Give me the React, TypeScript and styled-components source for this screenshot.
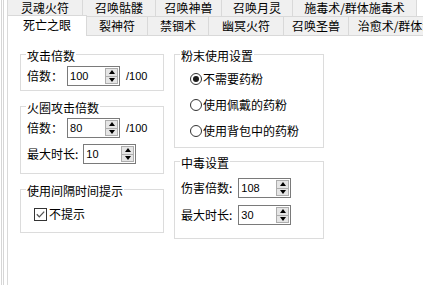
import styled, { createGlobalStyle } from 'styled-components';

const GlobalStyle = createGlobalStyle`
  html, body {
    margin: 0;
    padding: 0;
    background: #fff;
  }
  body {
    font-family: "Noto Sans CJK SC", "Noto Sans", sans-serif;
    font-size: 12px;
    line-height: 14px;
    color: #000;
    overflow: hidden;
  }
`;

type TabItem = { label: string; width: number };

const topTabs: TabItem[] = [
  { label: '灵魂火符', width: 76 },
  { label: '召唤骷髅', width: 74 },
  { label: '召唤神兽', width: 67 },
  { label: '召唤月灵', width: 72 },
  { label: '施毒术/群体施毒术', width: 125 },
];

const bottomTabs: TabItem[] = [
  { label: '死亡之眼', width: 80 },
  { label: '裂神符', width: 62 },
  { label: '禁锢术', width: 62 },
  { label: '幽冥火符', width: 76 },
  { label: '召唤圣兽', width: 66 },
  { label: '治愈术/群体治愈术', width: 120 },
];

const SpinBox = ({ value }: { value: string }) => (
  <Spin>
    <SpinValue>{value}</SpinValue>
    <SpinButtons>
      <SpinButton>
        <Arrow $up />
      </SpinButton>
      <SpinButton>
        <Arrow />
      </SpinButton>
    </SpinButtons>
  </Spin>
);

const Radio = ({ checked }: { checked?: boolean }) => (
  <svg width="12" height="12" viewBox="0 0 12 12">
    <circle cx="6" cy="6" r="5.5" fill="#fff" stroke="#333" />
    {checked && <circle cx="6" cy="6" r="3" fill="#1a1a1a" />}
  </svg>
);

const CheckBox = () => (
  <svg width="13" height="13" viewBox="0 0 13 13">
    <rect x="0.5" y="0.5" width="12" height="12" fill="#fff" stroke="#333" />
    <path d="M2.8 6.3 L5.3 8.9 L10.2 3.6" fill="none" stroke="#555" strokeWidth="1.3" />
  </svg>
);

const App = () => {
  return (
    <>
      <GlobalStyle />
      <Shell>
        <Frame $inset={1}>
          <Frame $inset={3}>
            <TabControl>
              <TopRow>
                {topTabs.map((t) => (
                  <TopTab key={t.label} $w={t.width}>
                    {t.label}
                  </TopTab>
                ))}
              </TopRow>
              <BottomRow>
                {bottomTabs.map((t, i) => (
                  <BottomTab key={t.label} $w={t.width} $active={i === 0}>
                    {t.label}
                  </BottomTab>
                ))}
              </BottomRow>

              <Panel>
                <Column $gap={7}>
                  <Group $pad="4px 0 4px 6px">
                    <Legend>攻击倍数</Legend>
                    <Row $gap={4}>
                      <span>倍数：</span>
                      <SpinBox value="100" />
                      <Suffix>/100</Suffix>
                    </Row>
                  </Group>

                  <Group $pad="4px 0 9px 6px" $gap={6}>
                    <Legend>火圈攻击倍数</Legend>
                    <Row $gap={4}>
                      <span>倍数：</span>
                      <SpinBox value="80" />
                      <Suffix>/100</Suffix>
                    </Row>
                    <Row $gap={5}>
                      <span>最大时长:</span>
                      <SpinBox value="10" />
                    </Row>
                  </Group>

                  <Group $pad="9px 0 10px 6px">
                    <Legend>使用间隔时间提示</Legend>
                    <CheckRow>
                      <CheckBox />
                      <span>不提示</span>
                    </CheckRow>
                  </Group>
                </Column>

                <Column $gap={5}>
                  <Group $pad="9px 0 8px 6px" $gap={10}>
                    <Legend>粉末使用设置</Legend>
                    <RadioRow>
                      <Radio checked />
                      <span>不需要药粉</span>
                    </RadioRow>
                    <RadioRow>
                      <Radio />
                      <span>使用佩戴的药粉</span>
                    </RadioRow>
                    <RadioRow>
                      <Radio />
                      <span>使用背包中的药粉</span>
                    </RadioRow>
                  </Group>

                  <Group $pad="9px 0 13px 6px" $gap={7}>
                    <Legend>中毒设置</Legend>
                    <Row $gap={6}>
                      <span>伤害倍数:</span>
                      <SpinBox value="108" />
                    </Row>
                    <Row $gap={6}>
                      <span>最大时长:</span>
                      <SpinBox value="30" />
                    </Row>
                  </Group>
                </Column>
              </Panel>
            </TabControl>
          </Frame>
        </Frame>
      </Shell>
    </>
  );
};

export default App;

// Styled Components
const Shell = styled.div`
  display: flex;
  height: 100vh;
  padding-left: 1px;
  box-sizing: border-box;
`;

const Frame = styled.div<{ $inset: number }>`
  flex: 1;
  display: flex;
  min-width: 0;
  border-left: 1px solid #d6d6d6;
  padding-left: ${({ $inset }) => $inset}px;
`;

const TabControl = styled.div`
  flex: 1;
  min-width: 0;
  display: flex;
  flex-direction: column;
  overflow: hidden;
`;

const TopRow = styled.div`
  display: flex;
  height: 17px;
`;

const TabBase = styled.div<{ $w: number }>`
  box-sizing: border-box;
  flex: none;
  width: ${({ $w }) => $w}px;
  margin-left: -1px;
  border: 1px solid #d9d9d9;
  display: flex;
  align-items: center;
  justify-content: center;
  white-space: nowrap;
  line-height: 16px;

  &:first-child {
    margin-left: 0;
  }
`;

const TopTab = styled(TabBase)`
  height: 17px;
  border-top: none;
  background: #f0f0f0;
`;

const BottomRow = styled.div`
  display: flex;
  align-items: flex-end;
  margin-top: -2px;
`;

const BottomTab = styled(TabBase)<{ $active?: boolean }>`
  height: ${({ $active }) => ($active ? 21 : 19)}px;
  border-bottom: none;
  background: ${({ $active }) => ($active ? '#fff' : '#f0f0f0')};
  margin-bottom: ${({ $active }) => ($active ? -1 : 0)}px;
  padding-bottom: ${({ $active }) => ($active ? 3 : 0)}px;
  position: ${({ $active }) => ($active ? 'relative' : 'static')};
  z-index: ${({ $active }) => ($active ? 1 : 'auto')};
`;

const Panel = styled.div`
  flex: 1;
  border-top: 1px solid #d9d9d9;
  border-left: 1px solid #d9d9d9;
  padding: 10px 0 0 12px;
  display: grid;
  grid-template-columns: 144px 150px;
  column-gap: 10px;
  align-content: start;
  align-items: start;
`;

const Column = styled.div<{ $gap: number }>`
  display: flex;
  flex-direction: column;
  gap: ${({ $gap }) => $gap}px;
`;

const Group = styled.fieldset<{ $pad: string; $gap?: number }>`
  margin: 0;
  min-width: 0;
  padding: ${({ $pad }) => $pad};
  border: 1px solid #dcdcdc;
  display: flex;
  flex-direction: column;
  gap: ${({ $gap }) => $gap ?? 0}px;
`;

const Legend = styled.legend`
  padding: 4px 1px 0;
  margin-left: -1px;
  line-height: 12px;
  white-space: nowrap;
`;

const Row = styled.div<{ $gap: number }>`
  display: flex;
  align-items: center;
  gap: ${({ $gap }) => $gap}px;
  height: 20px;
  white-space: nowrap;
`;

const Suffix = styled.span`
  margin-left: 2px;
  font-family: "Liberation Sans", Arial, sans-serif;
  font-size: 11px;
  color: #000;
`;

const Spin = styled.div`
  box-sizing: border-box;
  width: 53px;
  height: 20px;
  border: 1px solid #7a7a7a;
  background: #fff;
  display: flex;
  align-items: stretch;
`;

const SpinValue = styled.span`
  flex: 1;
  padding-left: 2px;
  display: flex;
  align-items: center;
  font-family: "Liberation Sans", Arial, sans-serif;
  font-size: 11px;
  color: #000;
`;

const SpinButtons = styled.div`
  width: 13px;
  margin: 1px;
  display: flex;
  flex-direction: column;
`;

const SpinButton = styled.div`
  flex: 1;
  box-sizing: border-box;
  border: 1px solid #adadad;
  background: #e5e5e5;
  display: flex;
  align-items: center;
  justify-content: center;

  & + & {
    margin-top: -1px;
  }
`;

const Arrow = styled.span<{ $up?: boolean }>`
  width: 0;
  height: 0;
  border-left: 3.5px solid transparent;
  border-right: 3.5px solid transparent;
  ${({ $up }) => ($up ? 'border-bottom: 4px solid #000;' : 'border-top: 4px solid #000;')}
`;

const RadioRow = styled.div`
  display: flex;
  align-items: center;
  gap: 1px;
  height: 16px;
  padding-left: 9px;
  white-space: nowrap;
`;

const CheckRow = styled.div`
  display: flex;
  align-items: center;
  gap: 2px;
  height: 16px;
  padding-left: 7px;
  white-space: nowrap;
`;
